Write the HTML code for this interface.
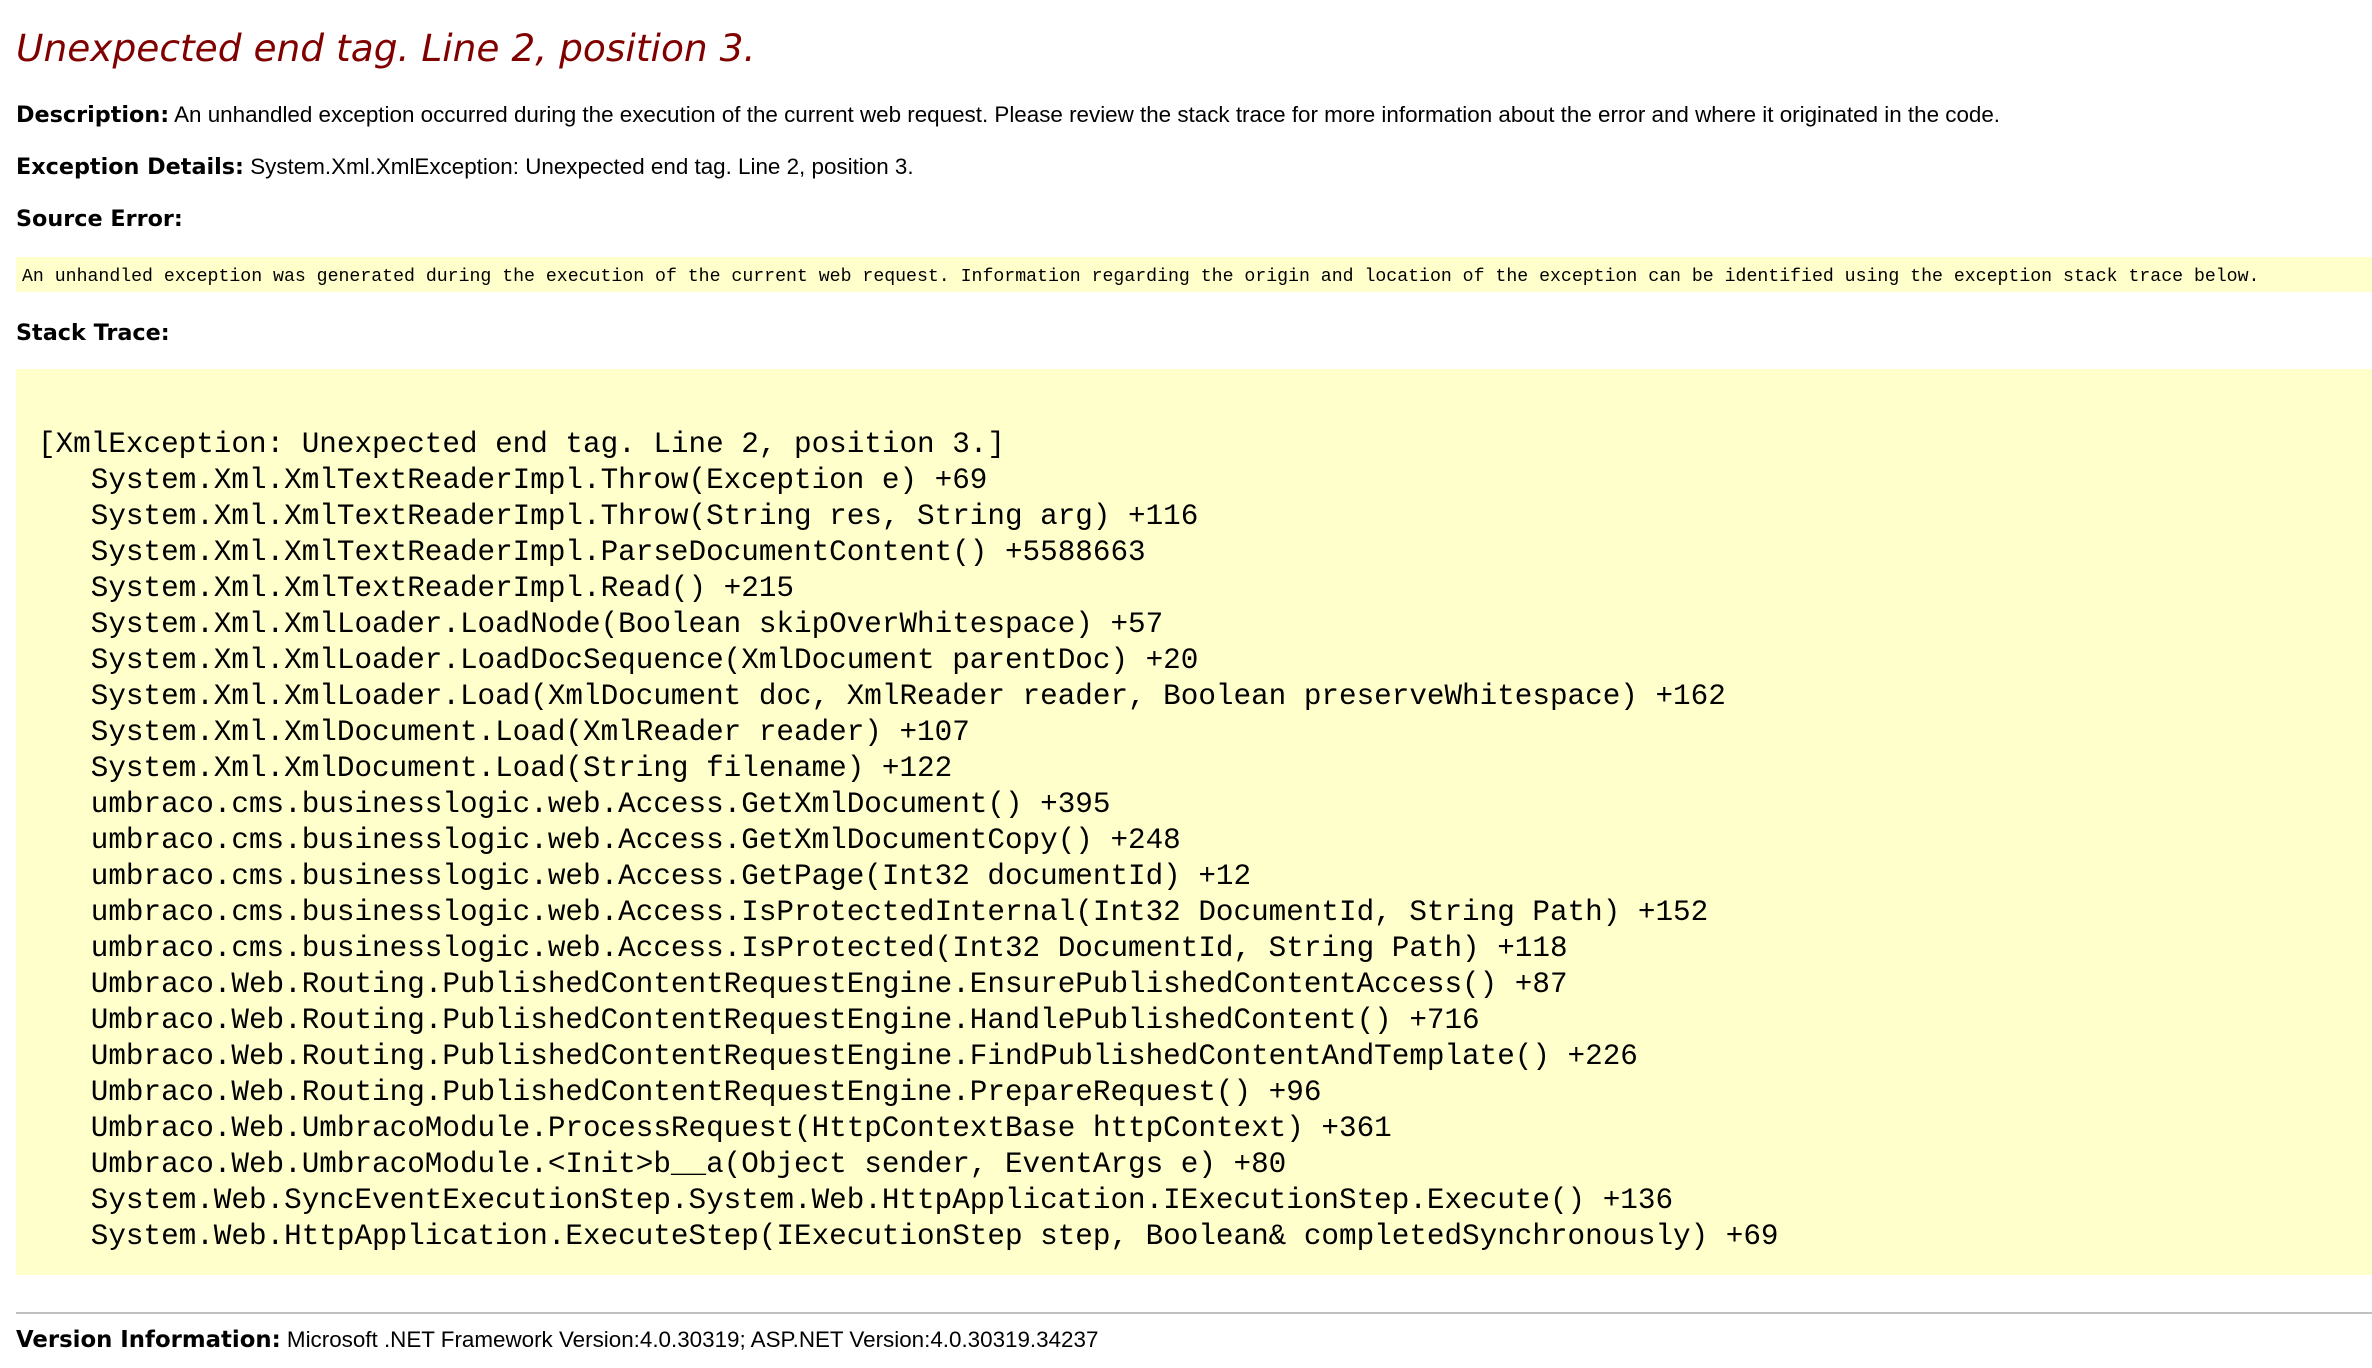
<!DOCTYPE html>
<html><head><meta charset="utf-8"><style>
html,body{margin:0;padding:0;width:2372px;height:1368px;background:#fff;overflow:hidden;position:relative;font-family:"Liberation Sans",Arial,sans-serif;color:#000}
.a{position:absolute;white-space:pre;margin:0}
.s{font-size:22.4px;line-height:25px}
b{font-weight:bold;font-family:"DejaVu Sans",Verdana,sans-serif;font-size:22.3px}
</style></head><body>
<div class="a" style="left:16px;top:26px;font-family:'DejaVu Sans',Verdana,sans-serif;font-size:37.5px;line-height:44px;font-style:italic;color:#800000">Unexpected end tag. Line 2, position 3.</div>
<div class="a s" style="left:16px;top:102px"><b>Description:</b> An unhandled exception occurred during the execution of the current web request. Please review the stack trace for more information about the error and where it originated in the code.</div>
<div class="a s" style="left:16px;top:154px"><b>Exception Details:</b> System.Xml.XmlException: Unexpected end tag. Line 2, position 3.</div>
<div class="a s" style="left:16px;top:206px"><b>Source Error:</b></div>
<div class="a" style="left:16px;top:257px;width:2356px;height:35px;background:#ffffcc"></div>
<div class="a" style="left:22px;top:267px;font-family:'Liberation Mono',monospace;font-size:18.2px;line-height:20px">An unhandled exception was generated during the execution of the current web request. Information regarding the origin and location of the exception can be identified using the exception stack trace below.</div>
<div class="a s" style="left:16px;top:320px"><b>Stack Trace:</b></div>
<div class="a" style="left:16px;top:369px;width:2356px;height:906px;background:#ffffcc"></div>
<pre class="a" style="left:38px;top:427px;font-family:'Liberation Mono',monospace;font-size:29.3px;line-height:36px">[XmlException: Unexpected end tag. Line 2, position 3.]
   System.Xml.XmlTextReaderImpl.Throw(Exception e) +69
   System.Xml.XmlTextReaderImpl.Throw(String res, String arg) +116
   System.Xml.XmlTextReaderImpl.ParseDocumentContent() +5588663
   System.Xml.XmlTextReaderImpl.Read() +215
   System.Xml.XmlLoader.LoadNode(Boolean skipOverWhitespace) +57
   System.Xml.XmlLoader.LoadDocSequence(XmlDocument parentDoc) +20
   System.Xml.XmlLoader.Load(XmlDocument doc, XmlReader reader, Boolean preserveWhitespace) +162
   System.Xml.XmlDocument.Load(XmlReader reader) +107
   System.Xml.XmlDocument.Load(String filename) +122
   umbraco.cms.businesslogic.web.Access.GetXmlDocument() +395
   umbraco.cms.businesslogic.web.Access.GetXmlDocumentCopy() +248
   umbraco.cms.businesslogic.web.Access.GetPage(Int32 documentId) +12
   umbraco.cms.businesslogic.web.Access.IsProtectedInternal(Int32 DocumentId, String Path) +152
   umbraco.cms.businesslogic.web.Access.IsProtected(Int32 DocumentId, String Path) +118
   Umbraco.Web.Routing.PublishedContentRequestEngine.EnsurePublishedContentAccess() +87
   Umbraco.Web.Routing.PublishedContentRequestEngine.HandlePublishedContent() +716
   Umbraco.Web.Routing.PublishedContentRequestEngine.FindPublishedContentAndTemplate() +226
   Umbraco.Web.Routing.PublishedContentRequestEngine.PrepareRequest() +96
   Umbraco.Web.UmbracoModule.ProcessRequest(HttpContextBase httpContext) +361
   Umbraco.Web.UmbracoModule.&lt;Init&gt;b__a(Object sender, EventArgs e) +80
   System.Web.SyncEventExecutionStep.System.Web.HttpApplication.IExecutionStep.Execute() +136
   System.Web.HttpApplication.ExecuteStep(IExecutionStep step, Boolean&amp; completedSynchronously) +69</pre>
<div class="a" style="left:16px;top:1312px;width:2356px;height:2px;background:#c0c0c0"></div>
<div class="a" style="left:16px;top:1327px;font-size:22.4px;line-height:25px"><b style="font-size:22.8px">Version Information:</b> Microsoft .NET Framework Version:4.0.30319; ASP.NET Version:4.0.30319.34237</div>
</body></html>
